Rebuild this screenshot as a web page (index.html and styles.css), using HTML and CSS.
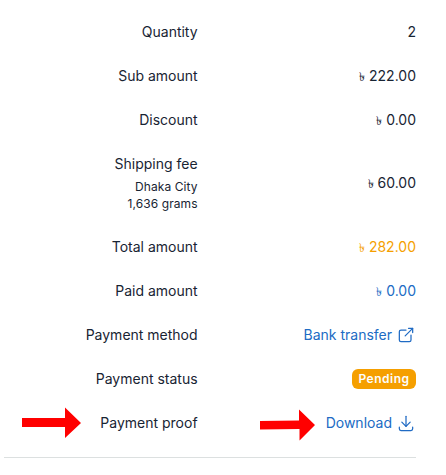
FILE: index.html
```html
<!DOCTYPE html>
<html lang="en">
<head>
    <meta charset="UTF-8">
    <meta name="viewport" content="width=device-width, initial-scale=1.0">
    <title>Order summary</title>
    <link rel="stylesheet" href="styles.css">
</head>
<body>
    <div class="summary">
        <div class="row">
            <div class="label">Quantity</div>
            <div class="value">2</div>
        </div>
        <div class="row">
            <div class="label">Sub amount</div>
            <div class="value"><span class="taka">৳</span> 222.00</div>
        </div>
        <div class="row">
            <div class="label">Discount</div>
            <div class="value"><span class="taka">৳</span> 0.00</div>
        </div>
        <div class="row row-shipping">
            <div class="label">
                Shipping fee
                <div class="details">
                    <div>Dhaka City</div>
                    <div>1,636 grams</div>
                </div>
            </div>
            <div class="value"><span class="taka">৳</span> 60.00</div>
        </div>
        <div class="row">
            <div class="label">Total amount</div>
            <div class="value text-warning"><span class="taka">৳</span> 282.00</div>
        </div>
        <div class="row">
            <div class="label">Paid amount</div>
            <div class="value text-primary"><span class="taka">৳</span> 0.00</div>
        </div>
        <div class="row">
            <div class="label">Payment method</div>
            <a class="value link" href="#">
                <span>Bank transfer</span>
                <svg class="icon" viewBox="0 0 24 24">
                    <path d="M12 6h-6a2 2 0 0 0 -2 2v10a2 2 0 0 0 2 2h10a2 2 0 0 0 2 -2v-6"/>
                    <path d="M11 13l9 -9"/>
                    <path d="M15 4h5v5"/>
                </svg>
            </a>
        </div>
        <div class="row">
            <div class="label">Payment status</div>
            <div class="value"><span class="badge">Pending</span></div>
        </div>
        <div class="row">
            <div class="label">Payment proof</div>
            <a class="value link" href="#">
                <span>Download</span>
                <svg class="icon" viewBox="0 0 24 24">
                    <path d="M4 17v2a2 2 0 0 0 2 2h12a2 2 0 0 0 2 -2v-2"/>
                    <path d="M7 11l5 5l5 -5"/>
                    <path d="M12 4v12"/>
                </svg>
            </a>
            <svg class="arrow arrow-label" viewBox="0 0 60 32">
                <path d="M0 11h43V0.500l16 15.500l-16 15V20H0z"/>
            </svg>
            <svg class="arrow arrow-link" viewBox="0 0 60 32">
                <path d="M0 12l39 -0.600V0.500l16 15.500l-15.500 15.500V20L0 20.500z"/>
            </svg>
        </div>
    </div>
</body>
</html>
```
FILE: styles.css
```css
:root {
    --text-color: #182433;
    --primary-color: #206bc4;
    --warning-color: #f59f00;
    --border-color: #dce0e0;
}

* {
    margin: 0;
    padding: 0;
    box-sizing: border-box;
}

body {
    font-family: Inter, "Noto Sans", sans-serif;
    font-size: 14px;
    line-height: 20px;
    background: #ffffff;
    color: var(--text-color);
}

.summary {
    width: 412px;
    margin: 10px 0 0 4px;
    padding-bottom: 12px;
    border-bottom: 1px solid var(--border-color);
}

.row {
    position: relative;
    display: grid;
    grid-template-columns: 193.6px 1fr;
    align-items: center;
    padding: 12px 0;
}

.row-shipping {
    padding-bottom: 13px;
}

.label,
.value {
    text-align: right;
}

.details {
    margin-top: 4px;
    font-size: 12px;
    line-height: 17px;
    letter-spacing: 0.08px;
}

.taka {
    font-size: 12px;
    line-height: 1;
}

.text-warning {
    color: var(--warning-color);
}

.text-primary {
    color: var(--primary-color);
}

.link {
    display: flex;
    justify-content: flex-end;
    align-items: center;
    gap: 4px;
    color: var(--primary-color);
    text-decoration: none;
}

.icon {
    width: 20px;
    height: 20px;
    fill: none;
    stroke: currentColor;
    stroke-width: 1.5;
    stroke-linecap: round;
    stroke-linejoin: round;
}

.badge {
    display: block;
    width: 64px;
    margin-left: auto;
    border-radius: 6px;
    background: var(--warning-color);
    color: #fcfdfe;
    font-size: 12px;
    font-weight: 600;
    letter-spacing: 0.5px;
    text-align: center;
}

/* Red pointers drawn over the proof row */
.arrow {
    position: absolute;
    width: 60px;
    height: 32px;
    fill: #ff0000;
}

.arrow-label {
    top: 6px;
    left: 18px;
}

.arrow-link {
    top: 8px;
    left: 256px;
}
```
